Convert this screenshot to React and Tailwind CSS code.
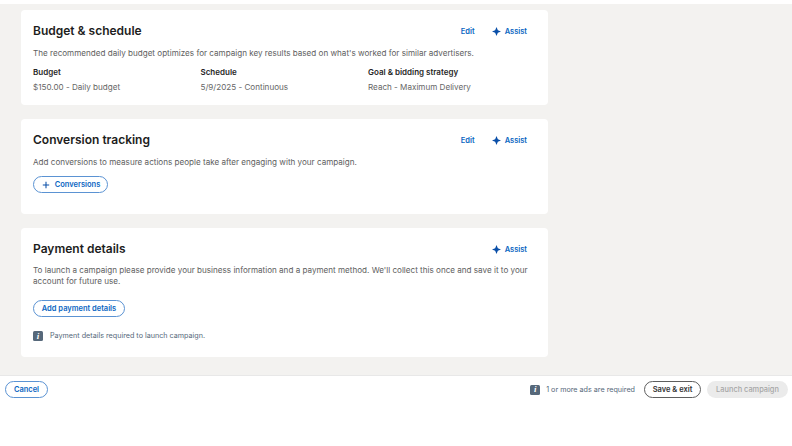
import React from 'react';

const Spark = () => (
  <svg viewBox="0 0 16 16" className="w-[9px] h-[9px] mr-[4px] mb-[1px]" fill="#0a4fa8">
    <path d="M8 0 L10.4 5.6 L16 8 L10.4 10.4 L8 16 L5.6 10.4 L0 8 L5.6 5.6 Z" />
  </svg>
);

const InfoBadge = () => (
  <span className="w-[10px] h-[10px] rounded-[1.5px] bg-[#56687a] text-white flex items-center justify-center text-[9px] leading-none font-bold italic font-['Liberation_Serif',serif]">
    i
  </span>
);

const Actions = ({ edit = true }) => (
  <div className="mt-[1px] flex items-center text-[7.5px] font-semibold text-[#0a66c2]">
    {edit && <span className="mr-[17px]">Edit</span>}
    <span className="flex items-center mr-[9px]">
      <Spark />
      Assist
    </span>
  </div>
);

const CardHead = ({ title, edit }) => (
  <div className="flex items-center justify-between h-[18px]">
    <h2 className="text-[12px] font-semibold text-[#1d1d1d]">{title}</h2>
    <Actions edit={edit} />
  </div>
);

const Field = ({ label, value }) => (
  <div className="w-[167.5px]">
    <div className="text-[8px] leading-[12px] font-semibold text-[#262626]">{label}</div>
    <div className="mt-[3px] text-[8.1px] leading-[12px] text-[#666666]">{value}</div>
  </div>
);

const OutlineButton = ({ children, className }) => (
  <button className={`h-[17px] rounded-full border border-[#5b93d3] bg-white text-[7.5px] font-semibold text-[#0a66c2] flex items-center justify-center ${className}`}>
    {children}
  </button>
);

export default function App() {
  return (
    <div className="w-[792px] h-[446px] overflow-hidden bg-white font-['Inter',sans-serif] flex flex-col">
      <main className="mt-[4px] h-[371px] bg-[#f3f2f0] pt-[6px] pl-[21px] flex flex-col gap-[14px]">
        <section className="w-[527px] h-[95px] bg-white rounded-[4px] px-[12px] pt-[12px]">
          <CardHead title="Budget & schedule" />
          <p className="mt-[7px] text-[8.1px] leading-[12px] text-[#5e5e5e]">
            The recommended daily budget optimizes for campaign key results based on what's worked for similar advertisers.
          </p>
          <div className="mt-[7px] flex">
            <Field label="Budget" value="$150.00 - Daily budget" />
            <Field label="Schedule" value="5/9/2025 - Continuous" />
            <Field label="Goal & bidding strategy" value="Reach - Maximum Delivery" />
          </div>
        </section>

        <section className="w-[527px] h-[95px] bg-white rounded-[4px] px-[12px] pt-[12px]">
          <CardHead title="Conversion tracking" />
          <p className="mt-[7px] text-[8.1px] leading-[12px] text-[#5e5e5e]">
            Add conversions to measure actions people take after engaging with your campaign.
          </p>
          <OutlineButton className="mt-[8px] w-[75px] pl-[1px] gap-[5px]">
            <svg viewBox="0 0 10 10" className="w-[8px] h-[8px]" stroke="#0a4fa8" strokeWidth="1.3" fill="none">
              <path d="M5 1v8M1 5h8" />
            </svg>
            Conversions
          </OutlineButton>
        </section>

        <section className="w-[527px] h-[129px] bg-white rounded-[4px] px-[12px] pt-[12px]">
          <CardHead title="Payment details" edit={false} />
          <p className="mt-[7px] w-[500px] text-[8.1px] leading-[11px] text-[#5e5e5e]">
            To launch a campaign please provide your business information and a payment method. We'll collect this once and save it to your account for future use.
          </p>
          <OutlineButton className="mt-[13px] w-[92px]">Add payment details</OutlineButton>
          <div className="mt-[14px] flex items-center gap-[7px] text-[7.2px] text-[#56687a]">
            <InfoBadge />
            Payment details required to launch campaign.
          </div>
        </section>
      </main>

      <footer className="border-t border-[#e8e8e8] h-[71px] pl-[5px] pr-[4px] pt-[5px] flex items-start justify-between">
        <button className="h-[17px] w-[43px] rounded-full border border-[#5b93d3] text-[7.5px] font-semibold text-[#0a66c2]">
          Cancel
        </button>
        <div className="flex items-center">
          <InfoBadge />
          <span className="ml-[6px] pt-[1px] text-[7.2px] text-[#56687a]">1 or more ads are required</span>
          <button className="ml-[9px] h-[17px] w-[57px] rounded-full border border-[#5e5e5e] text-[7.5px] font-semibold text-[#333333]">
            Save & exit
          </button>
          <button className="ml-[6px] h-[17px] w-[81px] rounded-full bg-[#ebebeb] text-[7.4px] font-medium text-[#a6a6a6]">
            Launch campaign
          </button>
        </div>
      </footer>
    </div>
  );
}
